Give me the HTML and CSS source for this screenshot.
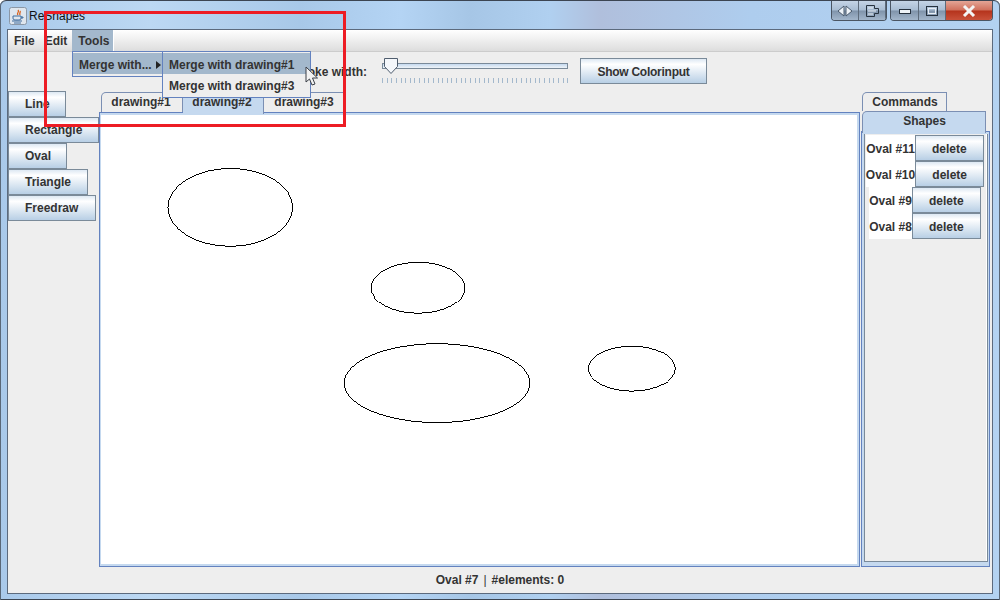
FILE: index.html
```html
<!DOCTYPE html>
<html>
<head>
	<meta charset="utf-8">
	<title>ReShapes</title>
	<link rel="stylesheet" href="styles.css">
</head>
<body>
	<div class="frame">
		<div class="titlebar">
			<svg class="app-icon" width="18" height="18" viewBox="0 0 18 18">
				<rect x="0.5" y="0.5" width="17" height="17" rx="2" fill="#dfe6ee" stroke="#8b97a6"/>
				<path d="M9 3c2 2-2 3 0 5M11 4c1 1-1 2 0 4" fill="none" stroke="#d9601a" stroke-width="1.3"/>
				<path d="M4 9h8v2c0 2-1 2-4 2s-4 0-4-2zM12 10h2v1h-2M3 14h10M5 16h7" fill="none" stroke="#3f6c9e"/>
			</svg>
			<span class="app-title">ReShapes</span>
			<div class="win-group">
				<span class="win-btn aero-btn">
					<svg width="20" height="12" viewBox="0 0 20 12"><path d="M9 1v10L3 6zM11 1v10l6-5z" fill="#eef3f8" stroke="#4a5a6c"/></svg>
				</span>
				<span class="win-btn aero-btn">
					<svg width="16" height="14" viewBox="0 0 16 14"><path d="M2.500 1.500h8v3h4v5h-4v3h-8z" fill="none" stroke="#26323f" stroke-width="1"/><path d="M4 4h5M4 7h8M4 10h5" stroke="#e8eef5"/></svg>
				</span>
			</div>
			<div class="win-group win-caption">
				<span class="win-btn min-btn">
					<svg width="14" height="8" viewBox="0 0 14 8"><rect x="1.500" y="2.500" width="11" height="4" fill="#eef3f8" stroke="#26323f"/></svg>
				</span>
				<span class="win-btn max-btn">
					<svg width="14" height="12" viewBox="0 0 14 12"><rect x="1.500" y="1.500" width="11" height="9" fill="none" stroke="#26323f"/><rect x="3.500" y="3.500" width="7" height="5" fill="none" stroke="#e8eef5"/></svg>
				</span>
				<span class="win-btn close-btn">
					<svg width="16" height="12" viewBox="0 0 16 12"><path d="M3 1l10 10M13 1L3 11" stroke="#f4f4f4" stroke-width="3"/></svg>
				</span>
			</div>
		</div>

		<div class="client">
			<div class="menubar">
				<span class="menu menu-first">File</span>
				<span class="menu">Edit</span>
				<span class="menu menu-open">Tools</span>
			</div>

			<div class="toolbar">
				<span class="stroke-label">Stroke width:</span>
				<div class="slider">
					<div class="slider-track"></div>
					<div class="slider-ticks"></div>
					<svg class="slider-thumb" width="16" height="17" viewBox="0 0 16 17">
						<path d="M1.500 0.500h13v8l-6.500 7-6.500-7z" fill="#f4f7fb" stroke="#4f5d6e"/>
					</svg>
				</div>
				<button class="btn color-btn">Show Colorinput</button>
			</div>

			<div class="main">
				<div class="tools">
					<button class="btn tool-line">Line</button>
					<button class="btn tool-rect">Rectangle</button>
					<button class="btn tool-oval">Oval</button>
					<button class="btn tool-tri">Triangle</button>
					<button class="btn tool-free">Freedraw</button>
				</div>

				<div class="center">
					<div class="tabs">
						<span class="tab tab-1">drawing#1</span>
						<span class="tab tab-2 tab-on">drawing#2</span>
						<span class="tab tab-3">drawing#3</span>
					</div>
					<div class="pane">
						<svg class="canvas" viewBox="0 0 757 450">
							<ellipse cx="129.500" cy="92.500" rx="62.500" ry="39"/>
							<ellipse cx="317.500" cy="173" rx="47" ry="25.500"/>
							<ellipse cx="336.500" cy="268.500" rx="93" ry="39.500"/>
							<ellipse cx="531.500" cy="254" rx="43.500" ry="22.500"/>
						</svg>
					</div>
				</div>

				<div class="side">
					<div class="side-tabs">
						<div class="tab side-back">Commands</div>
						<div class="tab tab-on side-front">Shapes</div>
					</div>
					<div class="side-pane">
						<div class="shape-list">
							<div class="shape-row"><span class="shape-name">Oval #11</span><button class="btn del-btn">delete</button></div>
							<div class="shape-row"><span class="shape-name">Oval #10</span><button class="btn del-btn">delete</button></div>
							<div class="shape-row"><span class="shape-name">Oval #9</span><button class="btn del-btn">delete</button></div>
							<div class="shape-row"><span class="shape-name">Oval #8</span><button class="btn del-btn">delete</button></div>
						</div>
					</div>
				</div>
			</div>

			<div class="status">Oval #7<span class="status-sep">|</span>#elements: 0</div>
		</div>
	</div>

	<div class="popup popup-tools">
		<div class="item item-on">Merge with...<span class="arrow"></span></div>
	</div>
	<div class="popup popup-merge">
		<div class="item item-on">Merge with drawing#1</div>
		<div class="item">Merge with drawing#3</div>
	</div>

	<svg class="cursor" width="14" height="20" viewBox="0 0 14 20">
		<path d="M1 1v15l3.500-3 2.500 6 3-1-2.500-6h5z" fill="#f2f2f2" stroke="#3a3f47"/>
	</svg>
	<div class="red-box"></div>
</body>
</html>
```

FILE: styles.css
```css
* {
	box-sizing: border-box;
}
html, body {
	margin: 0px;
	height: 100%;
	overflow: hidden;
}
body {
	font-family: "Liberation Sans", Arial, sans-serif;
	font-size: 12px;
	font-weight: bold;
	color: #333333;
}

/* window chrome */
.frame {
	width: 1000px;
	height: 600px;
	padding: 0px 7px 7px 7px;
	display: flex;
	flex-direction: column;
	border-top: 1px solid #3c4552;
	border-radius: 6px 6px 0px 0px;
	background: linear-gradient(90deg, #a9c9ea 0%, #bcd8f3 15%, #a8c8e8 30%, #b4d4f4 40%, #a6c6e6 47%, #b0d0f0 55%, #b0bfdc 60%, #aecdee 75%, #b3d2f1 100%);
	box-shadow: inset 1px 0px 0px #5a6878, inset -1px 0px 0px #5a6878, inset 0px -1px 0px #3c4552;
}
.titlebar {
	height: 28px;
	display: flex;
	align-items: flex-start;
	flex-shrink: 0;
}
.app-icon {
	margin: 6px 0px 0px 2px;
}
.app-title {
	margin: 8px 0px 0px 2px;
	color: #111111;
	font-weight: normal;
	flex: 1;
}
.win-group {
	display: flex;
	height: 20px;
	border: 1px solid #4a5563;
	border-top: none;
	border-radius: 0px 0px 4px 4px;
	overflow: hidden;
}
.win-caption {
	margin-left: 3px;
}
.win-btn {
	display: flex;
	align-items: center;
	justify-content: center;
	height: 100%;
	border-right: 1px solid #5d6b7b;
	background: linear-gradient(#c4d4e6 0%, #a8bcd2 48%, #7f93aa 52%, #a3b6cb 100%);
}
.aero-btn {
	width: 27px;
}
.min-btn {
	width: 28px;
}
.max-btn {
	width: 27px;
}
.close-btn {
	width: 46px;
	border-right: none;
	background: linear-gradient(#e4a596 0%, #d0705c 48%, #b5331c 52%, #c9513a 100%);
}

.client {
	flex: 1;
	display: flex;
	flex-direction: column;
	border: 1px solid #5c6a7d;
	background: #eeeeee;
}

/* menu bar */
.menubar {
	height: 22px;
	display: flex;
	border-bottom: 1px solid #cccccc;
	background: linear-gradient(#ffffff, #dddddd);
	flex-shrink: 0;
}
.menu {
	padding: 4px 5px 0px 5px;
	height: 21px;
}
.menu-first {
	margin-left: 1px;
}
.menu-open {
	padding: 4px 4px 0px 6px;
	background: #a3b8cc;
	border-right: 1px solid #ffffff;
}

/* toolbar */
.toolbar {
	height: 39px;
	display: flex;
	align-items: flex-start;
	padding-left: 283px;
	flex-shrink: 0;
}
.stroke-label {
	margin-top: 13px;
	width: 91px;
}
.slider {
	position: relative;
	width: 186px;
	height: 30px;
}
.slider-track {
	margin-top: 11px;
	height: 6px;
	border: 1px solid #7a8a99;
	background: linear-gradient(#c5d9ef, #eef3f8);
}
.slider-ticks {
	margin-top: 9px;
	height: 5px;
	background: repeating-linear-gradient(90deg, #a3b8cc 0px, #a3b8cc 1px, transparent 1px, transparent 4.630px);
}
.slider-thumb {
	position: absolute;
	left: 1px;
	top: 6px;
}
.btn {
	display: block;
	height: 26px;
	padding: 0px;
	border: 1px solid #7a8a99;
	background: linear-gradient(#dde8f3 0%, #ffffff 22%, #b8cfe5 100%);
	font-family: "Liberation Sans", Arial, sans-serif;
	font-size: 12px;
	font-weight: bold;
	color: #333333;
}
.color-btn {
	width: 127px;
	margin: 6px 0px 0px 12px;
	padding-top: 2px;
	letter-spacing: -0.25px;
}

/* main area */
.main {
	flex: 1;
	display: flex;
	min-height: 0;
}
.tools {
	width: 91px;
	flex-shrink: 0;
}
.tools .btn {
	text-align: left;
	padding-left: 16px;
}
.tool-line {
	width: 58px;
}
.tool-rect {
	width: 91px;
}
.tool-oval {
	width: 59px;
}
.tool-tri {
	width: 80px;
}
.tool-free {
	width: 88px;
}

.center {
	width: 761px;
	flex-shrink: 0;
	display: flex;
	flex-direction: column;
}
.tabs {
	height: 21px;
	display: flex;
	padding: 1px 0px 0px 2px;
	flex-shrink: 0;
}
.tab {
	border: 1px solid #7b8fb3;
	border-bottom: none;
	text-align: center;
	background: #eeeeee;
}
.tabs .tab {
	padding-top: 2px;
}
.tab-1 {
	width: 82px;
	padding-right: 2px;
	border-radius: 5px 0px 0px 0px;
}
.tabs .tab-2 {
	width: 81px;
	padding-right: 2px;
	border-left: none;
}
.tab-3 {
	width: 81px;
	border-left: none;
}
.tab-on {
	position: relative;
	margin-bottom: -2px;
	background: #c5d9ef;
}
.pane {
	flex: 1;
	border: 1px solid #6382bf;
	padding: 2px 2px 2px 1px;
	background: #c5d9ef;
	min-height: 0;
}
.canvas {
	display: block;
	width: 100%;
	height: 100%;
	background: #ffffff;
}
.canvas ellipse {
	fill: none;
	stroke: #000000;
	stroke-width: 1;
	shape-rendering: crispEdges;
}

/* right panel */
.side {
	flex: 1;
	display: flex;
	flex-direction: column;
	padding: 0px 2px 0px 1px;
	min-width: 0;
}
.side-tabs {
	height: 40px;
	padding: 1px 0px 0px 1px;
	flex-shrink: 0;
}
.side-back {
	width: 85px;
	height: 19px;
	padding: 2px 0px 0px 1px;
	border-radius: 5px 0px 0px 0px;
}
.side-front {
	width: 124px;
	height: 22px;
	padding: 2px 0px 0px 1px;
	margin-bottom: 0px;
	border-radius: 5px 0px 0px 0px;
}
.side-pane {
	flex: 1;
	border: 1px solid #6382bf;
	padding: 2px 2px 4px 2px;
	background: #c5d9ef;
	min-height: 0;
}
.shape-list {
	height: 100%;
	border: 1px solid #7a8a99;
	border-top: none;
	border-right: none;
	padding: 1px 2px 0px 0px;
	background: #eeeeee;
	box-shadow: inset -1px 0px 0px #ffffff, 1px 0px 0px #7a8a99;
}
.shape-row {
	display: flex;
	justify-content: center;
	height: 26px;
}
.shape-name {
	background: #ffffff;
	line-height: 28px;
	white-space: nowrap;
}
.del-btn {
	width: 69px;
	padding-top: 2px;
}

.status {
	height: 26px;
	line-height: 26px;
	text-align: center;
	flex-shrink: 0;
}
.status-sep {
	margin: 0px 5px;
	font-weight: normal;
}

/* things lying over the window */
.popup {
	position: absolute;
	border: 1px solid #6382bf;
	background: #eeeeee;
	padding: 1px 0px;
}
.popup-tools {
	left: 72px;
	top: 51px;
	width: 91px;
	height: 26px;
}
.popup-merge {
	left: 162px;
	top: 51px;
	width: 149px;
	height: 47px;
}
.item {
	height: 21px;
	line-height: 21px;
	padding: 2px 0px 0px 6px;
	position: relative;
}
.item-on {
	background: #a3b8cc;
}
.arrow {
	position: absolute;
	right: 1px;
	top: 8px;
	border-left: 5px solid #222222;
	border-top: 4px solid transparent;
	border-bottom: 4px solid transparent;
}
.cursor {
	position: absolute;
	left: 305px;
	top: 66px;
}
.red-box {
	position: absolute;
	left: 44px;
	top: 11px;
	width: 302px;
	height: 116px;
	border: 3px solid #ed1c24;
}
```
